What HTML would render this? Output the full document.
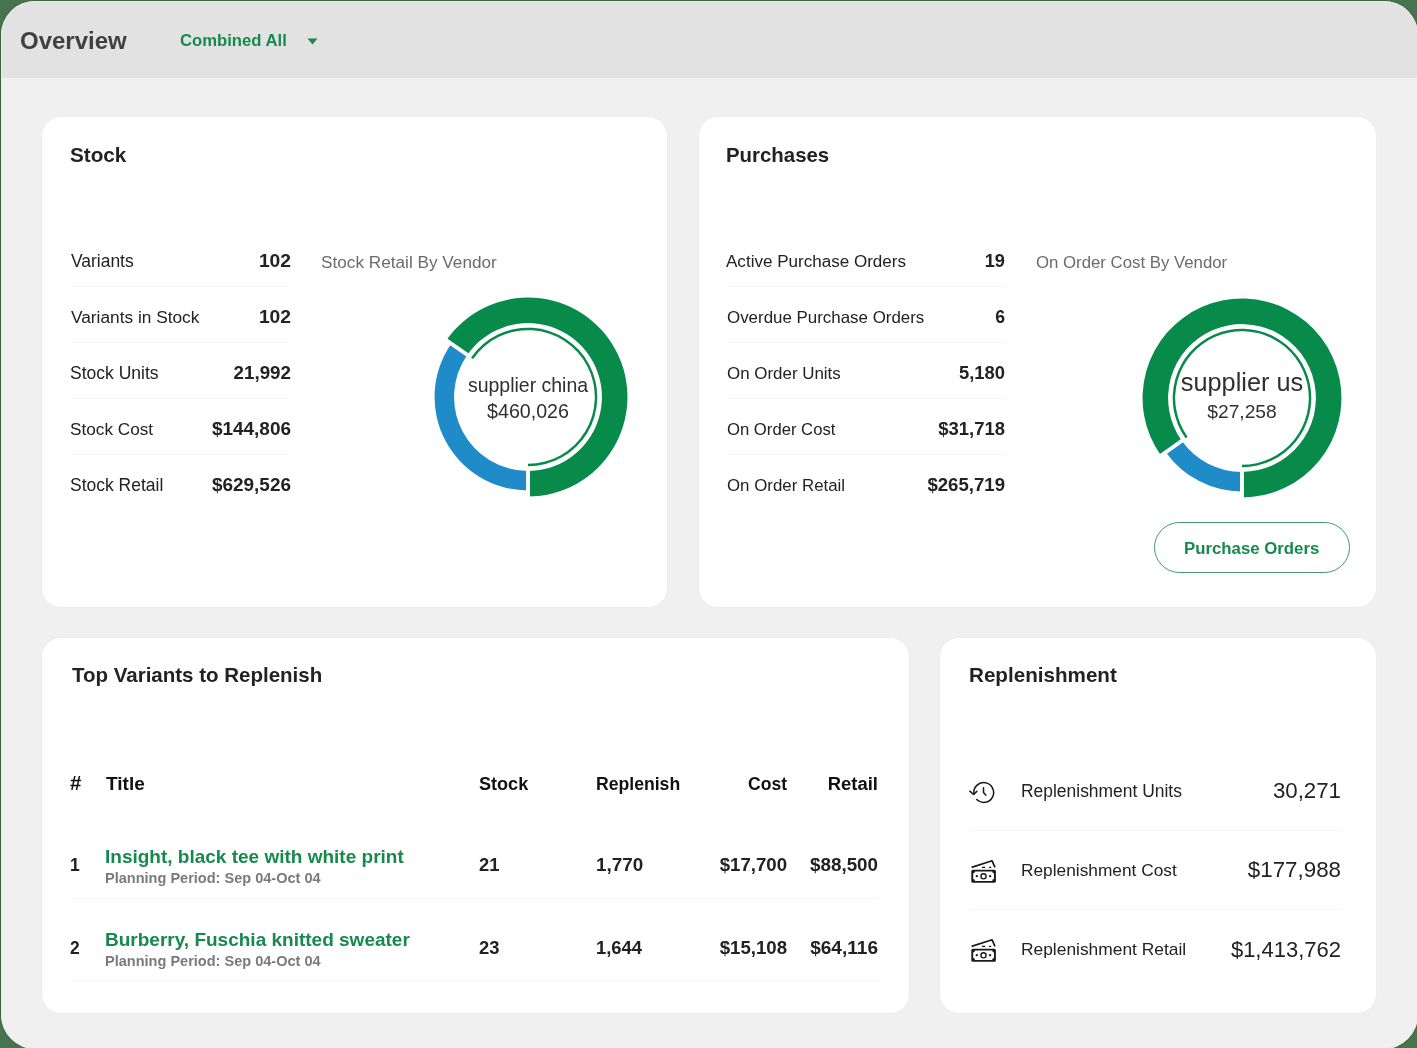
<!DOCTYPE html><html><head><meta charset="utf-8"><title>Overview</title><style>
*{box-sizing:border-box;margin:0;padding:0}
html,body{width:1417px;height:1048px;overflow:hidden;background:#46744e}
body{font-family:"Liberation Sans",sans-serif;position:relative}
.win{position:absolute;left:1px;top:1px;width:1417px;height:1048px;border-radius:34px;background:#f0f0f0;overflow:hidden;box-shadow:0 0 0 1px #3a663f}
.win::after{content:'';position:absolute;left:0;top:0;right:0;bottom:0;border:1px solid #e2ece2;border-radius:34px;pointer-events:none}
.hdr{position:absolute;left:0;top:0;width:100%;height:76.5px;background:#e2e2e2}
.card{position:absolute;background:#fff;border-radius:19px;box-shadow:0 0 0 1px #ededed}
.t{position:absolute;line-height:1;white-space:nowrap;will-change:transform}
.div{position:absolute;height:1px;background:#f7f7f7}
</style></head><body><div class="win"><header class="hdr"><div class="t" id="overview" style="top:28.20px;font-size:24.00px;font-weight:700;color:#404040;left:19.00px;">Overview</div><div class="t" id="combined" style="top:32.42px;font-size:16.68px;font-weight:700;color:#168a4d;left:179.00px;">Combined All</div><svg style="position:absolute;left:306px;top:36.6px" width="11" height="7" viewBox="0 0 11 7"><path d="M0.5 0.5H10.5L5.5 6.5Z" fill="#168a4d"/></svg></header><section class="card " style="left:41px;top:116px;width:625px;height:489.5px"><div class="t" id="st_title" style="top:28.20px;font-size:20.70px;font-weight:700;color:#222;left:28.20px;">Stock</div><div class="t" id="st_l0" style="top:135.57px;font-size:17.45px;color:#222;left:29.00px;">Variants</div><div class="t" id="st_v0" style="top:134.03px;font-size:19.26px;font-weight:700;color:#222;left:249.00px;transform:translateX(-100%);">102</div><div class="div" style="left:27px;width:223px;top:169.00px"></div><div class="t" id="st_l1" style="top:192.09px;font-size:17.30px;color:#222;left:29.00px;">Variants in Stock</div><div class="t" id="st_v1" style="top:189.93px;font-size:19.26px;font-weight:700;color:#222;left:249.00px;transform:translateX(-100%);">102</div><div class="div" style="left:27px;width:223px;top:225.00px"></div><div class="t" id="st_l2" style="top:247.92px;font-size:17.50px;color:#222;left:28.00px;">Stock Units</div><div class="t" id="st_v2" style="top:246.84px;font-size:18.78px;font-weight:700;color:#222;left:249.00px;transform:translateX(-100%);">21,992</div><div class="div" style="left:27px;width:223px;top:281.00px"></div><div class="t" id="st_l3" style="top:303.88px;font-size:17.20px;color:#222;left:28.00px;">Stock Cost</div><div class="t" id="st_v3" style="top:302.87px;font-size:18.97px;font-weight:700;color:#222;left:249.00px;transform:translateX(-100%);">$144,806</div><div class="div" style="left:27px;width:223px;top:337.00px"></div><div class="t" id="st_l4" style="top:359.53px;font-size:17.49px;color:#222;left:28.00px;">Stock Retail</div><div class="t" id="st_v4" style="top:359.27px;font-size:18.97px;font-weight:700;color:#222;left:249.00px;transform:translateX(-100%);">$629,526</div><div class="t" id="st_chart" style="top:136.98px;font-size:17.20px;color:#6b6b6b;left:279.00px;">Stock Retail By Vendor</div><svg style="position:absolute;left:375.80px;top:170.45px" width="220" height="220" viewBox="0 0 220 220"><path d="M28.34 53.24A99.45 99.45 0 1 1 110.00 209.45L110.00 183.90A73.9 73.9 0 1 0 49.32 67.82Z" fill="#088a4b"/><path d="M110.00 203.45A93.45 93.45 0 0 1 33.26 56.67L49.32 67.82A73.9 73.9 0 0 0 110.00 183.90Z" fill="#1f8bc9"/><line x1="110.00" y1="170.00" x2="110.00" y2="215.00" stroke="#fff" stroke-width="3.9"/><line x1="60.73" y1="75.76" x2="23.78" y2="50.08" stroke="#fff" stroke-width="3.9"/><path d="M53.09 70.45A69.3 69.3 0 1 1 110.00 179.30L110.00 176.80A66.8 66.8 0 1 0 55.15 71.88Z" fill="#088a4b"/></svg><div class="t" id="d1_lbl" style="top:259.44px;font-size:19.49px;color:#303030;left:485.55px;transform:translateX(-50%);">supplier china</div><div class="t" id="d1_val" style="top:284.89px;font-size:19.65px;color:#303030;left:485.55px;transform:translateX(-50%);">$460,026</div></section><section class="card " style="left:698px;top:116px;width:677px;height:490px"><div class="t" id="pu_title" style="top:27.96px;font-size:20.40px;font-weight:700;color:#222;left:26.80px;">Purchases</div><div class="t" id="pu_l0" style="top:135.90px;font-size:17.06px;color:#222;left:27.00px;">Active Purchase Orders</div><div class="t" id="pu_v0" style="top:134.91px;font-size:18.22px;font-weight:700;color:#222;left:305.50px;transform:translateX(-100%);">19</div><div class="div" style="left:27px;width:280.5px;top:169.00px"></div><div class="t" id="pu_l1" style="top:192.92px;font-size:16.92px;color:#222;left:27.50px;">Overdue Purchase Orders</div><div class="t" id="pu_v1" style="top:191.83px;font-size:17.61px;font-weight:700;color:#222;left:305.50px;transform:translateX(-100%);">6</div><div class="div" style="left:27px;width:280.5px;top:225.00px"></div><div class="t" id="pu_l2" style="top:249.41px;font-size:16.93px;color:#222;left:27.50px;">On Order Units</div><div class="t" id="pu_v2" style="top:247.15px;font-size:18.41px;font-weight:700;color:#222;left:305.50px;transform:translateX(-100%);">5,180</div><div class="div" style="left:27px;width:280.5px;top:281.00px"></div><div class="t" id="pu_l3" style="top:304.82px;font-size:16.68px;color:#222;left:27.50px;">On Order Cost</div><div class="t" id="pu_v3" style="top:303.30px;font-size:18.47px;font-weight:700;color:#222;left:305.50px;transform:translateX(-100%);">$31,718</div><div class="div" style="left:27px;width:280.5px;top:337.00px"></div><div class="t" id="pu_l4" style="top:361.06px;font-size:16.87px;color:#222;left:27.50px;">On Order Retail</div><div class="t" id="pu_v4" style="top:359.08px;font-size:18.61px;font-weight:700;color:#222;left:305.50px;transform:translateX(-100%);">$265,719</div><div class="t" id="pu_chart" style="top:138.32px;font-size:16.80px;color:#6b6b6b;left:337.00px;">On Order Cost By Vendor</div><svg style="position:absolute;left:432.70px;top:170.50px" width="220" height="220" viewBox="0 0 220 220"><path d="M28.94 167.61A99.45 99.45 0 1 1 110.00 209.45L110.00 183.90A73.9 73.9 0 1 0 49.76 152.81Z" fill="#088a4b"/><path d="M110.00 203.45A93.45 93.45 0 0 1 33.83 164.13L49.76 152.81A73.9 73.9 0 0 0 110.00 183.90Z" fill="#1f8bc9"/><line x1="110.00" y1="170.00" x2="110.00" y2="215.00" stroke="#fff" stroke-width="3.9"/><line x1="61.09" y1="144.76" x2="24.41" y2="170.82" stroke="#fff" stroke-width="3.9"/><path d="M53.51 150.14A69.3 69.3 0 1 1 110.00 179.30L110.00 176.80A66.8 66.8 0 1 0 55.55 148.70Z" fill="#088a4b"/></svg><div class="t" id="d2_lbl" style="top:252.88px;font-size:25.31px;color:#303030;left:542.55px;transform:translateX(-50%);">supplier us</div><div class="t" id="d2_val" style="top:284.85px;font-size:19.24px;color:#303030;left:542.55px;transform:translateX(-50%);">$27,258</div><div class="btn" style="position:absolute;left:455px;top:405px;width:196px;height:51px;border:1px solid #44996b;border-radius:26px"></div><div class="t" id="btn" style="top:423.93px;font-size:16.79px;font-weight:700;color:#168a4d;left:485.00px;">Purchase Orders</div></section><section class="card " style="left:41px;top:637px;width:867px;height:374.5px"><div class="t" id="tv_title" style="top:27.38px;font-size:20.50px;font-weight:700;color:#222;left:29.50px;">Top Variants to Replenish</div><div class="t" id="th_hash" style="top:134.96px;font-size:20.52px;font-weight:700;color:#111;left:28.00px;">#</div><div class="t" id="th_title" style="top:136.22px;font-size:19.03px;font-weight:700;color:#111;left:63.50px;">Title</div><div class="t" id="th_stock" style="top:137.03px;font-size:18.08px;font-weight:700;color:#111;left:436.50px;">Stock</div><div class="t" id="th_repl" style="top:138.43px;font-size:17.62px;font-weight:700;color:#111;left:553.50px;">Replenish</div><div class="t" id="th_cost" style="top:137.99px;font-size:17.54px;font-weight:700;color:#111;left:744.50px;transform:translateX(-100%);">Cost</div><div class="t" id="th_retail" style="top:136.71px;font-size:18.45px;font-weight:700;color:#111;left:836.00px;transform:translateX(-100%);">Retail</div><div class="t" id="r0_n" style="top:219.12px;font-size:17.50px;font-weight:700;color:#222;left:28.00px;">1</div><div class="t" id="r0_t" style="top:209.44px;font-size:19.01px;font-weight:700;color:#168a4d;left:62.50px;">Insight, black tee with white print</div><div class="t" id="r0_p" style="top:233.44px;font-size:14.54px;font-weight:700;color:#7a7a7a;left:62.50px;">Planning Period: Sep 04-Oct 04</div><div class="t" id="r0_s" style="top:218.37px;font-size:18.39px;font-weight:700;color:#222;left:436.50px;">21</div><div class="t" id="r0_r" style="top:217.97px;font-size:18.86px;font-weight:700;color:#222;left:553.50px;">1,770</div><div class="t" id="r0_c" style="top:218.16px;font-size:18.64px;font-weight:700;color:#222;left:744.50px;transform:translateX(-100%);">$17,700</div><div class="t" id="r0_rt" style="top:218.03px;font-size:18.79px;font-weight:700;color:#222;left:836.00px;transform:translateX(-100%);">$88,500</div><div class="div" style="left:27px;width:809.5px;top:260.00px"></div><div class="t" id="r1_n" style="top:302.32px;font-size:17.50px;font-weight:700;color:#222;left:28.00px;">2</div><div class="t" id="r1_t" style="top:291.64px;font-size:19.01px;font-weight:700;color:#168a4d;left:62.50px;">Burberry, Fuschia knitted sweater</div><div class="t" id="r1_p" style="top:315.64px;font-size:14.54px;font-weight:700;color:#7a7a7a;left:62.50px;">Planning Period: Sep 04-Oct 04</div><div class="t" id="r1_s" style="top:301.07px;font-size:18.39px;font-weight:700;color:#222;left:436.50px;">23</div><div class="t" id="r1_r" style="top:301.04px;font-size:18.42px;font-weight:700;color:#222;left:553.50px;">1,644</div><div class="t" id="r1_c" style="top:301.36px;font-size:18.64px;font-weight:700;color:#222;left:744.50px;transform:translateX(-100%);">$15,108</div><div class="t" id="r1_rt" style="top:299.99px;font-size:19.07px;font-weight:700;color:#222;left:836.00px;transform:translateX(-100%);">$64,116</div><div class="div" style="left:27px;width:809.5px;top:342.00px"></div></section><section class="card " style="left:939px;top:637px;width:436px;height:374.5px"><div class="t" id="rp_title" style="top:26.86px;font-size:20.64px;font-weight:700;color:#222;left:29.00px;">Replenishment</div><svg style="position:absolute;left:24px;top:137px" width="40" height="40" viewBox="964 775 40 40"><g fill="none" stroke="#1b1b1b" stroke-width="1.55" stroke-linecap="round" stroke-linejoin="round"><path d="M973.9 793.9A9.9 9.9 0 1 1 976.7 799.5"/><path d="M969.8 791.2L973.6 794.5L976.8 791.4"/><path d="M983.5 787.7V792.6L985.8 795.1"/></g></svg><svg style="position:absolute;left:24px;top:212px" width="40" height="40" viewBox="964 850 40 40"><path fill="#1b1b1b" d="M972.8 869.7H994.4A1.5 1.5 0 0 1 995.9 871.2V881.3A1.5 1.5 0 0 1 994.4 882.8H972.8A1.5 1.5 0 0 1 971.3 881.3V871.2A1.5 1.5 0 0 1 972.8 869.7ZM975 871.6H992.2A1.8 1.8 0 0 0 994 873.4V879.1A1.8 1.8 0 0 0 992.2 880.9H975A1.8 1.8 0 0 0 973.2 879.1V873.4A1.8 1.8 0 0 0 975 871.6Z" fill-rule="evenodd"/><g fill="none" stroke="#1b1b1b"><path d="M971.6 867.4L992.1 860.8L995 867.3" stroke-width="1.7" stroke-linejoin="round"/><circle cx="983.5" cy="876.3" r="2.55" stroke-width="1.4"/><path d="M982 867.4H985.2M989 867.4H991.2" stroke-width="1.1"/></g><circle cx="976.8" cy="876.2" r="1.15" fill="#1b1b1b"/><circle cx="990.1" cy="876.2" r="1.15" fill="#1b1b1b"/></svg><svg style="position:absolute;left:24px;top:290.79999999999995px" width="40" height="40" viewBox="964 850 40 40"><path fill="#1b1b1b" d="M972.8 869.7H994.4A1.5 1.5 0 0 1 995.9 871.2V881.3A1.5 1.5 0 0 1 994.4 882.8H972.8A1.5 1.5 0 0 1 971.3 881.3V871.2A1.5 1.5 0 0 1 972.8 869.7ZM975 871.6H992.2A1.8 1.8 0 0 0 994 873.4V879.1A1.8 1.8 0 0 0 992.2 880.9H975A1.8 1.8 0 0 0 973.2 879.1V873.4A1.8 1.8 0 0 0 975 871.6Z" fill-rule="evenodd"/><g fill="none" stroke="#1b1b1b"><path d="M971.6 867.4L992.1 860.8L995 867.3" stroke-width="1.7" stroke-linejoin="round"/><circle cx="983.5" cy="876.3" r="2.55" stroke-width="1.4"/><path d="M982 867.4H985.2M989 867.4H991.2" stroke-width="1.1"/></g><circle cx="976.8" cy="876.2" r="1.15" fill="#1b1b1b"/><circle cx="990.1" cy="876.2" r="1.15" fill="#1b1b1b"/></svg><div class="t" id="rp_l0" style="top:145.35px;font-size:17.47px;color:#222;left:80.50px;">Replenishment Units</div><div class="t" id="rp_v0" style="top:142.26px;font-size:22.28px;color:#222;left:401.00px;transform:translateX(-100%);">30,271</div><div class="div" style="left:29px;width:373px;top:192.00px"></div><div class="t" id="rp_l1" style="top:223.99px;font-size:17.31px;color:#222;left:80.80px;">Replenishment Cost</div><div class="t" id="rp_v1" style="top:221.22px;font-size:22.33px;color:#222;left:401.00px;transform:translateX(-100%);">$177,988</div><div class="div" style="left:29px;width:373px;top:271.00px"></div><div class="t" id="rp_l2" style="top:302.82px;font-size:17.39px;color:#222;left:80.80px;">Replenishment Retail</div><div class="t" id="rp_v2" style="top:301.10px;font-size:22.00px;color:#222;left:401.00px;transform:translateX(-100%);">$1,413,762</div></section></div></body></html>
